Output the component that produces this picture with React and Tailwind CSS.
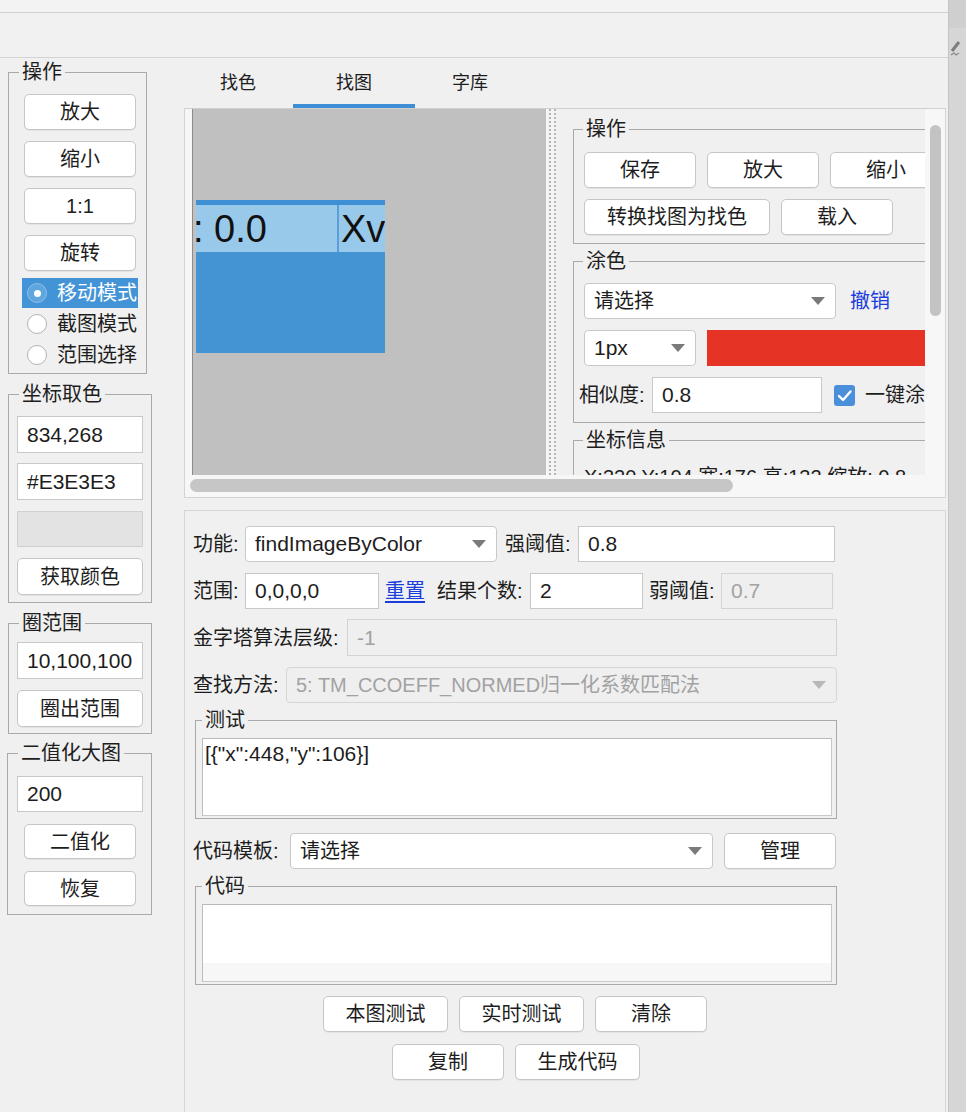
import React from 'react';

const FONT = "font-[family-name:'Liberation_Sans','Noto_Sans_CJK_SC',sans-serif]";

const Btn = ({ className = '', children }) => (
  <div className={`flex items-center justify-center bg-white border border-[#c6c6c6] rounded-[5px] shadow-[0_1px_0_rgba(0,0,0,0.05)] text-[20px] leading-none text-[#1d1d1d] shrink-0 whitespace-nowrap ${className}`}>
    {children}
  </div>
);

const Field = ({ className = '', disabled, children }) => (
  <div className={`flex items-center px-[9px] border shrink-0 text-[21px] leading-[26px] whitespace-nowrap overflow-hidden ${disabled ? 'bg-[#efefef] border-[#d3d3d3] text-[#a2a2a2]' : 'bg-white border-[#c8c8c8] text-[#1d1d1d]'} ${className}`}>
    {children}
  </div>
);

const Caret = ({ color }) => (
  <svg width="14" height="8" viewBox="0 0 14 8" className="shrink-0">
    <path d="M0 0h14L7 8z" fill={color} />
  </svg>
);

const Select = ({ className = '', text = 'text-[20px]', disabled, children }) => (
  <div className={`flex items-center justify-between pl-[9px] pr-[10px] border rounded-[4px] shrink-0 ${disabled ? 'bg-[#efefef] border-[#d6d6d6] text-[#a2a2a2]' : 'bg-white border-[#c8c8c8] text-[#1d1d1d]'} ${className}`}>
    <span className={`whitespace-nowrap overflow-hidden leading-[26px] ${text}`}>{children}</span>
    <Caret color={disabled ? '#b8b8b8' : '#7a7a7a'} />
  </div>
);

const Group = ({ title, className = '', legend = 'ml-[10px]', children }) => (
  <fieldset className={`border border-[#a9a9a9] shrink-0 ${className}`}>
    <legend className={`px-[3px] text-[20px] leading-[24px] text-[#1d1d1d] ${legend}`}>{title}</legend>
    {children}
  </fieldset>
);

const Label = ({ className = '', link, children }) => (
  <div className={`shrink-0 text-[20px] leading-none whitespace-nowrap ${link ? 'text-[#1a3ddc]' : 'text-[#1d1d1d]'} ${className}`}>{children}</div>
);

const Radio = ({ checked, label, className = '' }) => (
  <div className={`flex items-center ml-[13px] w-[116px] pl-[5px] gap-[10px] ${checked ? 'bg-[#4394d6] text-white' : 'text-[#1d1d1d]'} ${className}`}>
    {checked ? (
      <div className="w-[20px] h-[20px] rounded-full bg-[#5fa5de] border border-[#8cc0ea] flex items-center justify-center">
        <div className="w-[7px] h-[7px] rounded-full bg-white" />
      </div>
    ) : (
      <div className="w-[20px] h-[20px] rounded-full bg-white border border-[#b3b3b3]" />
    )}
    <span className="text-[20px] leading-none whitespace-nowrap">{label}</span>
  </div>
);

const Sidebar = () => (
  <div className="w-[184px] shrink-0 flex flex-col">
    <Group title="操作" className="ml-[8px] mt-[2px] w-[139px] pb-[3px]">
      <div className="flex flex-col">
        <Btn className="ml-[15px] mt-[10px] w-[112px] h-[36px]">放大</Btn>
        <Btn className="ml-[15px] mt-[11px] w-[112px] h-[36px]">缩小</Btn>
        <Btn className="ml-[15px] mt-[11px] w-[112px] h-[36px]">1:1</Btn>
        <Btn className="ml-[15px] mt-[11px] w-[112px] h-[36px]">旋转</Btn>
        <Radio checked label="移动模式" className="mt-[7px] h-[30px]" />
        <Radio label="截图模式" className="h-[31px]" />
        <Radio label="范围选择" className="h-[31px]" />
      </div>
    </Group>

    <Group title="坐标取色" className="ml-[8px] mt-[8px] w-[144px] pb-[7px]">
      <div className="flex flex-col">
        <Field className="ml-[8px] mt-[10px] w-[126px] h-[37px]">834,268</Field>
        <Field className="ml-[8px] mt-[10px] w-[126px] h-[37px]">#E3E3E3</Field>
        <div className="ml-[8px] mt-[11px] w-[126px] h-[36px] bg-[#e3e3e3] border border-[#d0d0d0]" />
        <Btn className="ml-[8px] mt-[11px] w-[126px] h-[37px]">获取颜色</Btn>
      </div>
    </Group>

    <Group title="圈范围" className="ml-[8px] mt-[8px] w-[144px] pb-[6px]">
      <div className="flex flex-col">
        <Field className="ml-[8px] mt-[7px] w-[126px] h-[37px]">10,100,100</Field>
        <Btn className="ml-[8px] mt-[11px] w-[126px] h-[37px]">圈出范围</Btn>
      </div>
    </Group>

    <Group title="二值化大图" className="ml-[7px] mt-[7px] w-[145px] pb-[8px]">
      <div className="flex flex-col">
        <Field className="ml-[9px] mt-[11px] w-[126px] h-[36px]">200</Field>
        <Btn className="ml-[16px] mt-[12px] w-[112px] h-[35px]">二值化</Btn>
        <Btn className="ml-[16px] mt-[12px] w-[112px] h-[35px]">恢复</Btn>
      </div>
    </Group>
  </div>
);

const Tabs = () => (
  <div className="h-[50px] flex -ml-[4px]">
    {['找色', '找图', '字库'].map((t, i) => (
      <div key={t} className="w-[116px] flex flex-col">
        <div className="h-[46px] pt-[4px] flex items-center justify-center text-[18px] leading-none text-[#1d1d1d]">{t}</div>
        {i === 1 ? <div className="h-[4px] -mx-[3px] bg-[#3f8fd6]" /> : <div className="h-[4px]" />}
      </div>
    ))}
  </div>
);

const Preview = () => (
  <div className="w-[354px] shrink-0 bg-[#c0c0c0] border-l border-[#8c8c8c] overflow-hidden">
    <div className="ml-[3px] mt-[91px] w-[189px] flex flex-col">
      <div className="h-[5px] bg-[#3f8fd4]" />
      <div className="h-[47px] bg-[#99c9ea] flex overflow-hidden">
        <div className="w-[144px] shrink-0 flex items-center text-[38px] leading-none text-[#111] -ml-[3px]">: 0.0</div>
        <div className="w-[2px] shrink-0 bg-[#5b9fd8]" />
        <div className="flex items-center text-[38px] leading-none text-[#111] pl-[2px] whitespace-nowrap">Xv</div>
      </div>
      <div className="h-[101px] bg-[#4494d4]" />
    </div>
  </div>
);

const Splitter = () => (
  <div className="w-[11px] shrink-0 bg-[#f4f4f4] flex justify-center gap-[3px] pl-[2px]">
    <div className="h-full border-l-2 border-dotted border-[#b4b4b4]" />
    <div className="h-full border-l-2 border-dotted border-[#b4b4b4]" />
  </div>
);

const RightPanel = () => (
  <div className="w-[368px] shrink-0 overflow-hidden bg-[#f0f0f0]">
    <div className="w-[420px] flex flex-col pt-[8px]">
      <Group title="操作" legend="ml-[9px]" className="ml-[16px] w-[380px] pb-[8px]">
        <div className="flex flex-col pl-[10px]">
          <div className="flex gap-[11px] mt-[11px]">
            <Btn className="w-[112px] h-[36px]">保存</Btn>
            <Btn className="w-[112px] h-[36px]">放大</Btn>
            <Btn className="w-[112px] h-[36px]">缩小</Btn>
          </div>
          <div className="flex gap-[11px] mt-[11px]">
            <Btn className="w-[186px] h-[36px]">转换找图为找色</Btn>
            <Btn className="w-[112px] h-[36px]">载入</Btn>
          </div>
        </div>
      </Group>

      <Group title="涂色" legend="ml-[9px]" className="ml-[16px] mt-[5px] w-[380px] pb-[9px]">
        <div className="flex flex-col">
          <div className="flex items-center mt-[10px] pl-[10px]">
            <Select className="w-[252px] h-[36px]">请选择</Select>
            <Label link className="ml-[14px]">撤销</Label>
          </div>
          <div className="flex items-center gap-[11px] mt-[11px] pl-[10px]">
            <Select className="w-[112px] h-[36px]" text="text-[21px]">1px</Select>
            <div className="w-[230px] h-[36px] bg-[#e53425]" />
          </div>
          <div className="flex items-center mt-[11px] pl-[5px]">
            <Label className="w-[73px]">相似度:</Label>
            <Field className="w-[170px] h-[36px]">0.8</Field>
            <svg width="21" height="21" viewBox="0 0 21 21" className="ml-[12px] shrink-0">
              <rect x="0" y="0" width="21" height="21" rx="3" fill="#4a8fda" />
              <path d="M5 11l4 4l7.5-8.5" fill="none" stroke="white" strokeWidth="2.4" strokeLinecap="round" strokeLinejoin="round" />
            </svg>
            <Label className="ml-[10px]">一键涂色</Label>
          </div>
        </div>
      </Group>

      <Group title="坐标信息" legend="ml-[9px]" className="ml-[16px] mt-[5px] w-[380px] pb-[8px]">
        <div className="pl-[10px] mt-[13px] text-[20px] leading-[24px] text-[#1d1d1d] whitespace-nowrap">
          X:320 Y:104 宽:176 高:132 缩放: 0.8
        </div>
      </Group>
    </div>
  </div>
);

const TopPane = () => (
  <div className="w-[762px] h-[390px] border border-[#d4d4d4] border-t-[#cfcfcf] flex flex-col bg-[#f4f4f4]">
    <div className="h-[366px] flex overflow-hidden">
      <div className="w-[7px] shrink-0 bg-[#f6f6f6]" />
      <Preview />
      <Splitter />
      <RightPanel />
      <div className="w-[20px] shrink-0 bg-[#f7f7f7] pt-[16px] pl-[5px]">
        <div className="w-[11px] h-[191px] rounded-full bg-[#c3c3c3]" />
      </div>
    </div>
    <div className="h-[22px] bg-[#f7f7f7] pt-[4px]">
      <div className="ml-[5px] w-[543px] h-[13px] rounded-full bg-[#c6c6c6]" />
    </div>
  </div>
);

const TextBox = ({ children, code }) => (
  <div className="ml-[6px] w-[630px] h-[78px] bg-white border border-[#c9c9c9] border-t-[#b9b9b9] border-l-[#bcbcbc] flex flex-col">
    <div className="flex-1 px-[2px] pt-[2px] text-[21px] leading-[25px] text-[#1d1d1d]">{children}</div>
    {code && <div className="h-[18px] bg-[#f7f7f7]" />}
  </div>
);

const Form = () => (
  <div className="w-[762px] flex-1 mt-[12px] border-t border-x border-[#d6d6d6] bg-[#f0f0f0] pl-[8px] pt-[15px] flex flex-col">
    <div className="flex items-center h-[36px]">
      <Label className="w-[52px]">功能:</Label>
      <Select className="w-[252px] h-[36px]" text="text-[21px]">findImageByColor</Select>
      <Label className="w-[81px] pl-[8px]">强阈值:</Label>
      <Field className="w-[257px] h-[36px]">0.8</Field>
    </div>
    <div className="flex items-center h-[36px] mt-[11px]">
      <Label className="w-[52px]">范围:</Label>
      <Field className="w-[134px] h-[36px]">0,0,0,0</Field>
      <Label link className="w-[58px] pl-[6px] underline underline-offset-[3px]">重置</Label>
      <Label className="w-[93px]">结果个数:</Label>
      <Field className="w-[113px] h-[36px]">2</Field>
      <Label className="w-[78px] pl-[6px]">弱阈值:</Label>
      <Field disabled className="w-[112px] h-[36px]">0.7</Field>
    </div>
    <div className="flex items-center h-[37px] mt-[10px]">
      <Label className="w-[154px]">金字塔算法层级:</Label>
      <Field disabled className="w-[490px] h-[37px]">-1</Field>
    </div>
    <div className="flex items-center h-[36px] mt-[11px]">
      <Label className="w-[93px]">查找方法:</Label>
      <Select disabled className="w-[551px] h-[36px]">5: TM_CCOEFF_NORMED归一化系数匹配法</Select>
    </div>

    <Group title="测试" legend="ml-[6px]" className="ml-[2px] mt-[5px] w-[642px] pb-[2px]">
      <div className="pt-[6px]">
        <TextBox>{'[{"x":448,"y":106}]'}</TextBox>
      </div>
    </Group>

    <div className="flex items-center h-[36px] mt-[14px]">
      <Label className="w-[97px]">代码模板:</Label>
      <Select className="w-[423px] h-[36px]">请选择</Select>
      <Btn className="ml-[11px] w-[112px] h-[36px]">管理</Btn>
    </div>

    <Group title="代码" legend="ml-[6px]" className="ml-[2px] mt-[5px] w-[642px] pb-[2px]">
      <div className="pt-[6px]">
        <TextBox code />
      </div>
    </Group>

    <div className="w-[644px] flex justify-center gap-[11px] mt-[11px]">
      <Btn className="w-[125px] h-[36px]">本图测试</Btn>
      <Btn className="w-[125px] h-[36px]">实时测试</Btn>
      <Btn className="w-[112px] h-[36px]">清除</Btn>
    </div>
    <div className="w-[646px] flex justify-center gap-[11px] mt-[12px]">
      <Btn className="w-[112px] h-[36px]">复制</Btn>
      <Btn className="w-[125px] h-[36px]">生成代码</Btn>
    </div>
  </div>
);

const App = () => {
  return (
    <div className={`w-[966px] h-[1112px] flex bg-[#f0f0f0] overflow-hidden ${FONT}`}>
      <div className="w-[948px] shrink-0 flex flex-col">
        <div className="h-[13px] bg-[#f3f3f3] border-b border-[#cfcfcf]" />
        <div className="h-[45px] bg-[#f1f1f1] border-b border-[#d3d3d3]" />
        <div className="flex flex-1">
          <Sidebar />
          <div className="flex flex-col">
            <Tabs />
            <TopPane />
            <Form />
          </div>
        </div>
      </div>
      <div className="w-[18px] shrink-0 flex flex-col bg-[#d6d6d6] border-l border-[#c4c4c4]">
        <div className="h-[28px] bg-[#cfcfcf]" />
        <svg width="12" height="16" viewBox="0 0 12 16" className="mt-[13px] ml-[1px]">
          <path d="M9 1L2 10" stroke="#7d7d7d" strokeWidth="3" />
          <path d="M1 14l3-2l2 2l3-2" stroke="#8a8a8a" strokeWidth="1.2" fill="none" />
        </svg>
      </div>
    </div>
  );
};

export default App;
